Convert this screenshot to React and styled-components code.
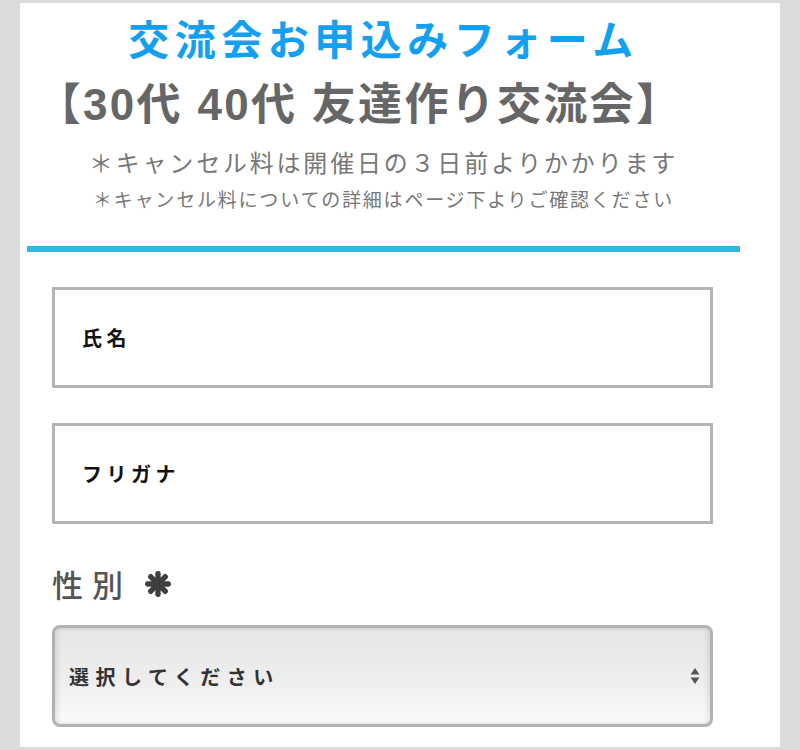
import styled, { createGlobalStyle } from "styled-components";

const GlobalStyle = createGlobalStyle`
  html, body {
    margin: 0;
    padding: 0;
    background: #dcdcdc;
  }
  body {
    font-family: "Noto Sans CJK JP", "Noto Sans", sans-serif;
  }
`;

const Panel = styled.div`
  margin: 3px 20px 0;
  height: 744px;
  background: #ffffff;
  overflow: hidden;
`;

const Content = styled.div`
  width: 713px;
  margin-left: 7px;
`;

const Header = styled.header`
  display: flex;
  flex-direction: column;
  align-items: center;
  padding-top: 10px;
`;

const Title = styled.h1`
  margin: 0;
  font-size: 41px;
  line-height: 48px;
  font-weight: 700;
  letter-spacing: 5.5px;
  color: #14a0f0;
`;

const EventName = styled.h2`
  margin: 20px 48px 0 0;
  font-family: "Liberation Sans", "Noto Sans CJK JP", sans-serif;
  font-size: 44px;
  line-height: 48px;
  font-weight: 700;
  color: #666666;
  letter-spacing: 2.3px;
`;

const Note = styled.p`
  margin: ${(p) => (p.small ? "4px" : "15px")} 0 0;
  font-size: ${(p) => (p.small ? "19px" : "24px")};
  line-height: ${(p) => (p.small ? "30px" : "36px")};
  letter-spacing: ${(p) => (p.small ? "1.8px" : "2.8px")};
  color: #777777;
  font-weight: 400;
`;

const Divider = styled.div`
  margin-top: 32px;
  height: 6px;
  background: #35b5e3;
`;

const Form = styled.form`
  display: flex;
  flex-direction: column;
  padding: 0 27px 0 25px;
`;

const TextInput = styled.input`
  box-sizing: border-box;
  margin-top: 35px;
  width: 100%;
  height: 101px;
  border: 3px solid #b4b4b4;
  border-radius: 0;
  padding: 0 27px;
  font-family: inherit;
  font-size: 20px;
  font-weight: 700;
  letter-spacing: 4.5px;
  color: #111111;
  background: #ffffff;
  outline: none;
  &::placeholder {
    color: #111111;
    opacity: 1;
  }
`;

const Label = styled.label`
  margin-top: 40px;
  display: flex;
  align-items: center;
  gap: 12px;
  font-size: 31px;
  line-height: 40px;
  letter-spacing: 9px;
  color: #555555;
  font-weight: 500;
`;

const Required = styled.svg`
  flex: none;
`;

const SelectWrap = styled.div`
  position: relative;
  margin-top: 21px;
`;

const Select = styled.select`
  box-sizing: border-box;
  width: 100%;
  height: 102px;
  appearance: none;
  -webkit-appearance: none;
  border: 3px solid #b2b2b2;
  border-radius: 8px;
  padding: 0 40px 0 14px;
  background: linear-gradient(#e6e6e6, #eeeeee 55%, #fbfbfb);
  box-shadow: inset -3px 0 4px rgba(0, 0, 0, 0.08), inset 3px 0 4px rgba(0, 0, 0, 0.08);
  font-family: inherit;
  font-size: 20px;
  font-weight: 700;
  letter-spacing: 6.5px;
  color: #333333;
  outline: none;
`;

const Arrows = styled.svg`
  position: absolute;
  right: 13px;
  top: 50%;
  transform: translateY(-50%);
  pointer-events: none;
`;

const spokes = [0, 45, 90, 135];

export default function App() {
  return (
    <>
      <GlobalStyle />
      <Panel>
        <Content>
          <Header>
            <Title>交流会お申込みフォーム</Title>
            <EventName>【30代 40代 友達作り交流会】</EventName>
            <Note>＊キャンセル料は開催日の３日前よりかかります</Note>
            <Note small>＊キャンセル料についての詳細はページ下よりご確認ください</Note>
          </Header>
          <Divider />
          <Form onSubmit={(e) => e.preventDefault()}>
            <TextInput type="text" placeholder="氏名" />
            <TextInput type="text" placeholder="フリガナ" />
            <Label htmlFor="gender">
              性別
              <Required width="28" height="28" viewBox="0 0 26 26">
                {spokes.map((r) => (
                  <rect
                    key={r}
                    x="10.5"
                    y="1"
                    width="5"
                    height="24"
                    rx="2.2"
                    fill="#3f3f3f"
                    transform={`rotate(${r} 13 13)`}
                  />
                ))}
              </Required>
            </Label>
            <SelectWrap>
              <Select id="gender" defaultValue="">
                <option value="">選択してください</option>
                <option value="male">男性</option>
                <option value="female">女性</option>
              </Select>
              <Arrows width="10" height="18" viewBox="0 0 10 18">
                <path d="M5 1 L9.5 7.5 H0.5 Z" fill="#555" />
                <path d="M5 17 L9.5 10.5 H0.5 Z" fill="#555" />
              </Arrows>
            </SelectWrap>
          </Form>
        </Content>
      </Panel>
    </>
  );
}
